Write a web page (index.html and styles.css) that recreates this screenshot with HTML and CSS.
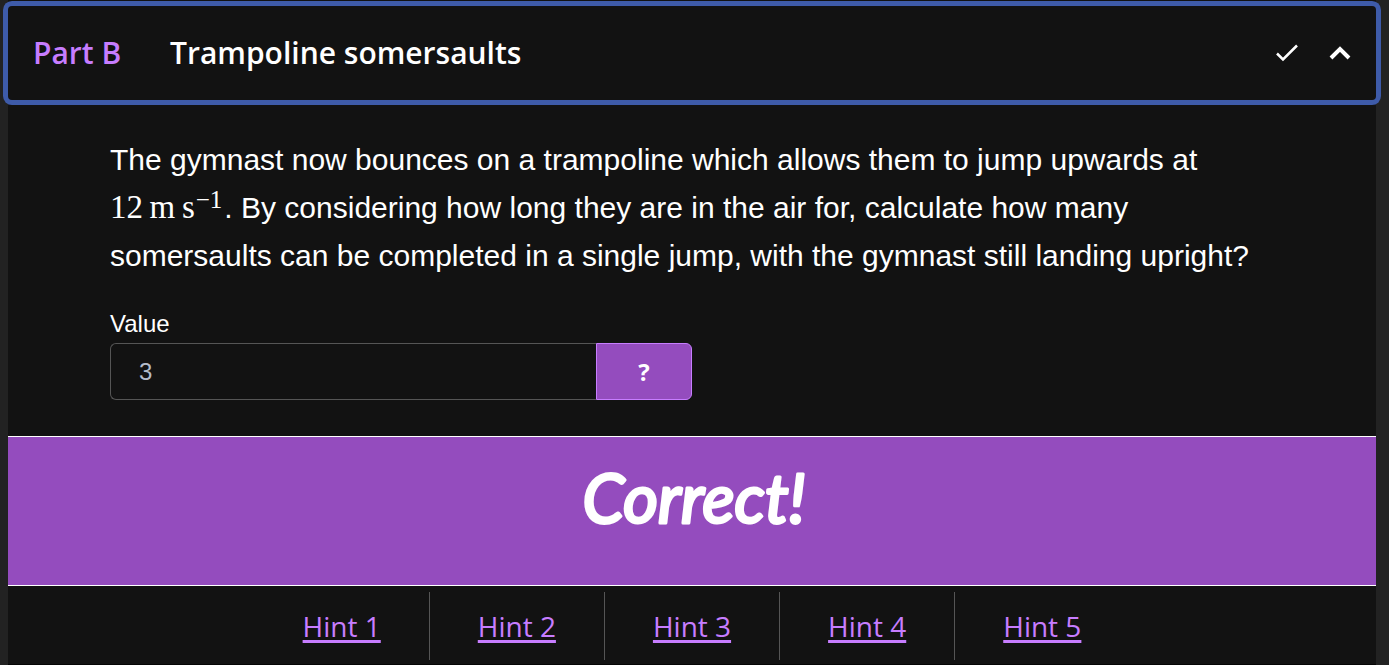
FILE: index.html
```html
<!DOCTYPE html>
<html lang="en">
<head>
<meta charset="utf-8">
<meta name="viewport" content="width=device-width, initial-scale=1">
<title>Trampoline somersaults</title>
<link rel="stylesheet" href="styles.css">
</head>
<body>
<main class="card">
  <button class="header" type="button" aria-expanded="true">
    <span class="part">Part B</span>
    <span class="title">Trampoline somersaults</span>
    <svg class="tick" viewBox="0 0 24 18" aria-hidden="true"><path d="M2 9.500l6 6L22 1.500"/></svg>
    <svg class="chevron" viewBox="0 0 22 14" aria-hidden="true"><path d="M2 12l9-9 9 9"/></svg>
  </button>
  <section class="question">
    <p class="text">The gymnast now bounces on a trampoline which allows them to jump upwards at <span class="math">12&#8201;m&#8201;s<sup>−1</sup></span>. By considering how long they are in the air for, calculate how many somersaults can be completed in a single jump, with the gymnast still landing upright?</p>
    <label class="label" for="value">Value</label>
    <div class="group">
      <input class="value" id="value" type="text" value="3">
      <button class="help" type="button">?</button>
    </div>
  </section>
  <section class="result">
    <h2 class="verdict"><svg class="script" viewBox="0 0 240 80"><text x="122" y="62" text-anchor="middle">Correct!</text></svg></h2>
  </section>
  <nav class="hints">
    <div class="hint"><a href="#hint1">Hint 1</a></div>
    <div class="hint"><a href="#hint2">Hint 2</a></div>
    <div class="hint"><a href="#hint3">Hint 3</a></div>
    <div class="hint"><a href="#hint4">Hint 4</a></div>
    <div class="hint"><a href="#hint5">Hint 5</a></div>
  </nav>
</main>
</body>
</html>
```
FILE: styles.css
```css
* { box-sizing: border-box; }
body {
  margin: 0;
  padding: 0 13px 0 8px;
  background: #222;
  color: #fff;
  font-family: "Liberation Sans", Arial, sans-serif;
}
.card {
  padding-top: 6px;
  background: #121212;
  border-bottom: 1px solid #050505;
}
.header {
  display: flex;
  align-items: center;
  width: 100%;
  height: 94px;
  padding: 0 25px;
  border: 0;
  border-radius: 4px;
  background: #121212;
  box-shadow: 0 0 0 5px #3e5ba9;
  color: #fff;
  font: 600 30px/40px "Open Sans", sans-serif;
  text-align: left;
}
.part { width: 137px; color: #c77dff; }
.title { flex: 1; }
.tick { width: 24px; height: 18px; margin-right: 30px; }
.chevron { width: 22px; height: 14px; }
.tick path, .chevron path { fill: none; stroke: #fff; stroke-width: 2.500; }
.chevron path { stroke-width: 4; }
.question { padding: 36px 102px; }
.text { margin: 0 0 28px; font-size: 30px; line-height: 48px; }
.math { margin-right: 2px; font-family: "Liberation Serif", serif; font-size: 33px; line-height: 1; white-space: nowrap; }
.math sup { margin-left: 1px; font-size: 25px; line-height: 0; vertical-align: 10px; }
.label { display: block; margin-bottom: 3px; font-size: 24px; line-height: 32px; }
.group { display: flex; width: 50%; height: 57px; }
.value {
  flex: 1;
  min-width: 0;
  padding: 0 28px;
  border: 1px solid #555;
  border-right: 0;
  border-radius: 6px 0 0 6px;
  background: #121212;
  color: #b4bcca;
  font: 24px "Liberation Sans", Arial, sans-serif;
}
.help {
  width: 96px;
  border: 1px solid #c77dff;
  border-radius: 0 6px 6px 0;
  background: #944cbe;
  color: #fff;
  font: 700 24px "Open Sans", sans-serif;
}
.result {
  height: 150px;
  padding-top: 24px;
  border: solid #fff;
  border-width: 1px 0;
  background: #944cbe;
}
.verdict { margin: 0; }
.script { display: block; width: 240px; height: 80px; margin: 0 auto; }
.script text {
  fill: #fff;
  stroke: #fff;
  stroke-width: 3px;
  stroke-linejoin: round;
  font: italic 400 67px Lato, cursive;
}
.hints { display: flex; justify-content: center; padding: 6px 0 4px; }
.hint { padding: 14px 48px; font: 28px/40px "Open Sans", sans-serif; }
.hint + .hint { border-left: 1px solid #555; }
.hint a { color: #c77dff; text-decoration-thickness: 3px; text-underline-offset: 3px; text-decoration-skip-ink: none; }
```
